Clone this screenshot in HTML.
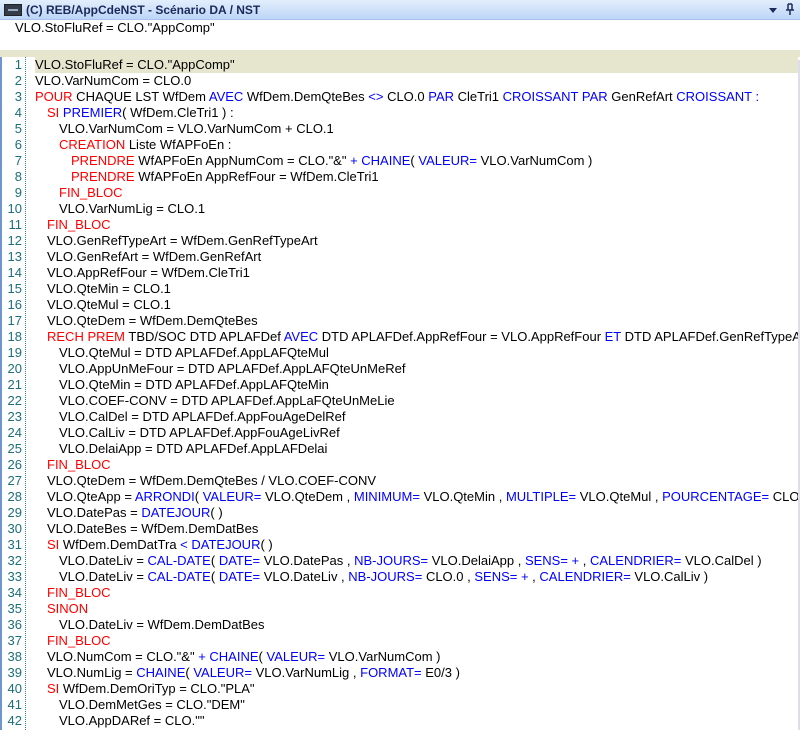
<!DOCTYPE html>
<html><head><meta charset="utf-8"><style>
*{margin:0;padding:0;box-sizing:border-box}
body{width:800px;height:730px;overflow:hidden;background:#fff;font-family:"Liberation Sans",sans-serif;position:relative}
#title{position:absolute;left:0;top:0;width:800px;height:20px;background:linear-gradient(#e3eefc,#bcd6f7);border-bottom:1px solid #a9c4e8}
#title .t{position:absolute;left:26px;top:3px;font-size:12px;font-weight:bold;color:#1b2a5a}
#title .ic{position:absolute;left:4px;top:4px;width:18px;height:12px;background:#333c4a;border:1px solid #222}
#title .ic:after{content:"";position:absolute;left:3px;top:4px;width:10px;height:2px;background:#9ab}
#top{position:absolute;left:15px;top:20px;font-size:13px;line-height:16px;color:#000}
#band{position:absolute;left:0;top:50px;width:800px;height:7px;background:#e6e6cf}
#lb{position:absolute;left:0;top:57px;width:2px;height:673px;background:#6f95cf}
#gut{position:absolute;left:25px;top:57px;height:673px;border-left:1px dotted #2a8a8a}
#rb{position:absolute;left:798px;top:60px;width:2px;height:670px;background:#dde}
.ln{position:absolute;left:0;width:22px;text-align:right;font-size:13px;color:#1c6e7a;height:16px;line-height:16px}
.c{position:absolute;left:35px;font-size:13px;color:#000;height:16px;line-height:16px;white-space:pre;width:763px;overflow:hidden}
.hl{background:#e6e6cf;width:763px}
.r{color:#f00}.b{color:#00f}
.ind{display:inline-block;width:4px}
</style></head><body>
<div id="title"><div class="ic"></div><div class="t">(C) REB/AppCdeNST - Scénario DA / NST</div>
<svg style="position:absolute;left:768px;top:6px" width="10" height="8"><path d="M1 2h8L5 7z" fill="#1b2a5a"/></svg>
<svg style="position:absolute;left:785px;top:3px" width="10" height="13"><path d="M3 1h4M3 1v6M7 1v6M1 7h8M5 7v5" stroke="#1b2a5a" stroke-width="1.5" fill="none"/></svg>
</div>
<div id="top">VLO.StoFluRef = CLO."AppComp"</div>
<div id="band"></div><div id="lb"></div><div id="gut"></div><div id="rb"></div>
<div id="code"></div>
<script>
var L=[
'<span class="hl" style="display:inline-block">VLO.StoFluRef = CLO."AppComp"</span>',
'VLO.VarNumCom = CLO.0',
'<r>POUR</r> CHAQUE LST WfDem <b>AVEC</b> WfDem.DemQteBes <b>&lt;&gt;</b> CLO.0 <b>PAR</b> CleTri1 <b>CROISSANT PAR</b> GenRefArt <b>CROISSANT :</b>',
'   <r>SI</r> <b>PREMIER</b>( WfDem.CleTri1 ) :',
'      VLO.VarNumCom = VLO.VarNumCom + CLO.1',
'      <r>CREATION</r> Liste WfAPFoEn :',
'         <r>PRENDRE</r> WfAPFoEn AppNumCom = CLO."&amp;" <b>+ CHAINE</b>( <b>VALEUR=</b> VLO.VarNumCom )',
'         <r>PRENDRE</r> WfAPFoEn AppRefFour = WfDem.CleTri1',
'      <r>FIN_BLOC</r>',
'      VLO.VarNumLig = CLO.1',
'   <r>FIN_BLOC</r>',
'   VLO.GenRefTypeArt = WfDem.GenRefTypeArt',
'   VLO.GenRefArt = WfDem.GenRefArt',
'   VLO.AppRefFour = WfDem.CleTri1',
'   VLO.QteMin = CLO.1',
'   VLO.QteMul = CLO.1',
'   VLO.QteDem = WfDem.DemQteBes',
'   <r>RECH PREM</r> TBD/SOC DTD APLAFDef <b>AVEC</b> DTD APLAFDef.AppRefFour = VLO.AppRefFour <b>ET</b> DTD APLAFDef.GenRefTypeArt',
'      VLO.QteMul = DTD APLAFDef.AppLAFQteMul',
'      VLO.AppUnMeFour = DTD APLAFDef.AppLAFQteUnMeRef',
'      VLO.QteMin = DTD APLAFDef.AppLAFQteMin',
'      VLO.COEF-CONV = DTD APLAFDef.AppLaFQteUnMeLie',
'      VLO.CalDel = DTD APLAFDef.AppFouAgeDelRef',
'      VLO.CalLiv = DTD APLAFDef.AppFouAgeLivRef',
'      VLO.DelaiApp = DTD APLAFDef.AppLAFDelai',
'   <r>FIN_BLOC</r>',
'   VLO.QteDem = WfDem.DemQteBes / VLO.COEF-CONV',
'   VLO.QteApp = <b>ARRONDI</b>( <b>VALEUR=</b> VLO.QteDem , <b>MINIMUM=</b> VLO.QteMin , <b>MULTIPLE=</b> VLO.QteMul , <b>POURCENTAGE=</b> CLO.0',
'   VLO.DatePas = <b>DATEJOUR</b>( )',
'   VLO.DateBes = WfDem.DemDatBes',
'   <r>SI</r> WfDem.DemDatTra <b>&lt; DATEJOUR</b>( )',
'      VLO.DateLiv = <b>CAL-DATE</b>( <b>DATE=</b> VLO.DatePas , <b>NB-JOURS=</b> VLO.DelaiApp , <b>SENS= +</b> , <b>CALENDRIER=</b> VLO.CalDel )',
'      VLO.DateLiv = <b>CAL-DATE</b>( <b>DATE=</b> VLO.DateLiv , <b>NB-JOURS=</b> CLO.0 , <b>SENS= +</b> , <b>CALENDRIER=</b> VLO.CalLiv )',
'   <r>FIN_BLOC</r>',
'   <r>SINON</r>',
'      VLO.DateLiv = WfDem.DemDatBes',
'   <r>FIN_BLOC</r>',
'   VLO.NumCom = CLO."&amp;" <b>+ CHAINE</b>( <b>VALEUR=</b> VLO.VarNumCom )',
'   VLO.NumLig = <b>CHAINE</b>( <b>VALEUR=</b> VLO.VarNumLig , <b>FORMAT=</b> E0/3 )',
'   <r>SI</r> WfDem.DemOriTyp = CLO."PLA"',
'      VLO.DemMetGes = CLO."DEM"',
'      VLO.AppDARef = CLO.""'];
var h='';
for(var i=0;i<L.length;i++){var y=57+i*16;
var s=L[i];var m=s.match(/^ */)[0].length;s=s.slice(m);
s=s.replace(/<r>/g,'<span class="r">').replace(/<\/r>/g,'</span>').replace(/<b>/g,'<span class="b">').replace(/<\/b>/g,'</span>');
if(m)s='<span class="ind" style="width:'+(m*4)+'px"></span>'+s;
h+='<div class="ln" style="top:'+y+'px">'+(i+1)+'</div><div class="c" style="top:'+y+'px">'+s+'</div>';}
document.getElementById('code').innerHTML=h;
</script>
</body></html>
